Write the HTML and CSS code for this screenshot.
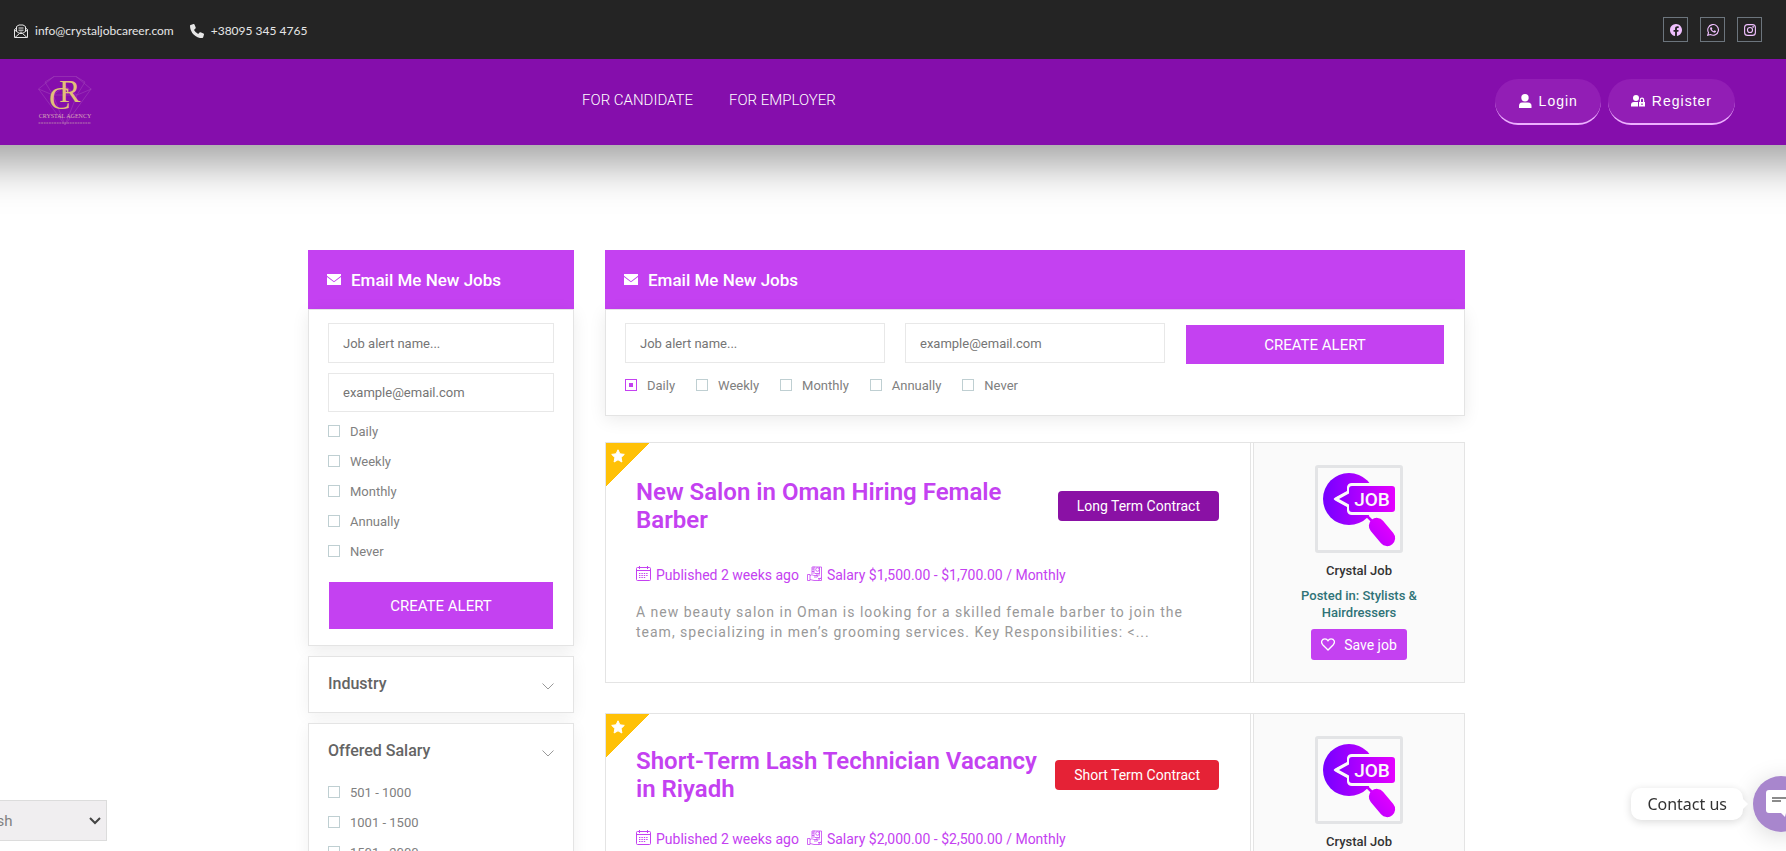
FILE: index.html
```html
<!DOCTYPE html>
<html lang="en">
<head>
    <meta charset="UTF-8">
    <meta name="viewport" content="width=device-width, initial-scale=1.0">
    <title>Crystal Job Career</title>
    <link rel="stylesheet" href="styles.css">
</head>
<body>
    <!-- shared icons -->
    <svg class="sprite" aria-hidden="true">
        <defs>
            <linearGradient id="job-gradient" x1="8" y1="0" x2="76" y2="0" gradientUnits="userSpaceOnUse">
                <stop offset="0" stop-color="#7a00ff"/>
                <stop offset="1" stop-color="#e400ff"/>
            </linearGradient>
        </defs>
        <symbol id="icon-envelope" viewBox="0 0 14 11">
            <path fill="#fff" d="M0 0h14v1.8L7 7.2 0 1.8zM0 3l7 5.3L14 3v8H0z"/>
        </symbol>
        <symbol id="icon-chevron" viewBox="0 0 12 7">
            <path fill="none" stroke="#999" d="M.5.5 6 6 11.500.5"/>
        </symbol>
        <symbol id="icon-star" viewBox="0 0 14 14">
            <path fill="#fff" stroke="#fff" stroke-linejoin="round" d="m7 .8 1.900 4 4.400.6-3.200 3.100.8 4.500L7 10.800 3.100 13l.8-4.500L.7 5.400l4.400-.6z"/>
        </symbol>
        <symbol id="icon-calendar" viewBox="0 0 15 15">
            <g fill="none" stroke="#c441f1">
                <rect x=".5" y="1.500" width="14" height="13" rx="1"/>
                <path d="M.5 4.500h14M3.500 0v3M11.500 0v3"/>
                <path d="M3 7.500h9M3 9.500h9M3 11.500h7" stroke-dasharray="1.400 1"/>
            </g>
        </symbol>
        <symbol id="icon-salary" viewBox="0 0 15 15">
            <g fill="none" stroke="#c441f1" stroke-width=".8">
                <path d="M.5 8.500H3v6H.5zM3 9.500c2-1.500 3 0 4 0h3c1 0 1 1.500 0 1.500H7M3 13.500l4 1h4l3.500-3"/>
                <path d="M5 8V1h9.500v13.500H11M7 .5v7.500M5 3h2M5 5.500h2"/>
                <circle cx="10.500" cy="3.500" r="1.800"/>
                <path d="M8 7.500h5M9 9h4M12.500 1v6M11 12.500h3"/>
            </g>
        </symbol>
        <symbol id="icon-heart" viewBox="0 0 14 13">
            <path fill="none" stroke="#fff" stroke-width="1.300" d="M7 12 1.700 6.700C-.6 4 1 .8 3.900.8 5.500.8 6.500 1.800 7 2.700 7.500 1.800 8.500.8 10.100.8 13 .8 14.600 4 12.300 6.700z"/>
        </symbol>
        <symbol id="logo-job" viewBox="0 0 82 82">
            <circle cx="31" cy="31" r="26" fill="url(#job-gradient)"/>
            <path d="m49 48 8 8" stroke="#c600ff" stroke-width="2.500"/>
            <rect x="56" y="48" width="16" height="32" rx="8" fill="url(#job-gradient)" transform="rotate(-40 64 64)"/>
            <path d="M78 15v32H34a5 5 0 0 1-5-4v-4l-11-6q-4-2 0-4l11-6v-4a5 5 0 0 1 5-4z" fill="#fafafa"/>
            <path d="M34 18h40a3 3 0 0 1 3 3v20a3 3 0 0 1-3 3H34a3 3 0 0 1-3-3v-4.500L21 31l10-5.500V21a3 3 0 0 1 3-3z" fill="url(#job-gradient)"/>
            <path d="M29 24.500 17.500 31 29 37.500" fill="none" stroke="#fafafa" stroke-width="2"/>
        </symbol>
    </svg>

    <div class="topbar">
        <div class="contacts">
            <a href="mailto:info@crystaljobcareer.com">
                <svg width="14" height="14" viewBox="0 0 14 14" fill="none" stroke="#e6e6e6">
                    <path d="M2.500 4 .5 5.500v8h13v-8l-2-1.500M2.500 7V2.500L5 1h4l2.500 1.500V7M.5 6l5 3.500M13.500 6l-5 3.500M1 13.500l4.500-4h3l4.500 4M4.500 4h5M4.500 6.200h5M5.500 8.200h3"/>
                </svg>
                info@crystaljobcareer.com
            </a>
            <a href="tel:+380953454765">
                <svg width="14" height="14" viewBox="0 0 14 14">
                    <path fill="#e6e6e6" d="M.6.9 3.500.1q.7-.2 1 .5l1.200 3q.2.6-.3 1L4 5.900A10 10 0 0 0 8.200 10l1.300-1.500q.4-.5 1-.3l3 1.300q.6.3.5 1l-.8 2.800q-.2.700-.9.700A12.300 12.300 0 0 1 0 1.700Q0 1 .6.900z"/>
                </svg>
                +38095 345 4765
            </a>
        </div>
        <div class="socials">
            <a href="#" aria-label="Facebook">
                <svg width="12" height="12" viewBox="0 0 16 16"><path fill="#f0c0ff" d="M16 8.049c0-4.446-3.582-8.050-8-8.050C3.580 0-.002 3.603-.002 8.050c0 4.017 2.926 7.347 6.750 7.951v-5.625h-2.030V8.050H6.750V6.275c0-2.017 1.195-3.131 3.022-3.131.876 0 1.791.157 1.791.157v1.980h-1.009c-.993 0-1.303.621-1.303 1.258v1.510h2.218l-.354 2.326H9.250V16c3.824-.604 6.750-3.934 6.750-7.951z"/></svg>
            </a>
            <a href="#" aria-label="WhatsApp">
                <svg width="12" height="12" viewBox="0 0 16 16">
                    <path fill="none" stroke="#f0c0ff" stroke-width="1.500" d="M1 15l1-3.600A7.100 7.100 0 1 1 4.600 14z"/>
                    <path fill="#f0c0ff" d="M5.200 4.200h.7q.3 0 .5.400l.6 1.400q.1.300-.1.500l-.6.800q1 1.600 2.700 2.300l.8-1q.2-.2.500-.1l1.600.8q.2.200.1.700-.3 1.500-2 1.500-1.500 0-3.700-1.900T4.100 6q0-1.200 1.100-1.800z"/>
                </svg>
            </a>
            <a href="#" aria-label="Instagram">
                <svg width="12" height="12" viewBox="0 0 16 16" fill="none" stroke="#f0c0ff" stroke-width="1.500">
                    <rect x=".8" y=".8" width="14.400" height="14.400" rx="4"/>
                    <circle cx="8" cy="8" r="3.400"/>
                    <circle cx="12.200" cy="3.800" r=".5"/>
                </svg>
            </a>
        </div>
    </div>

    <header class="header">
        <a class="logo" href="#" aria-label="Crystal Agency">
            <svg width="54" height="52" viewBox="0 0 54 52">
                <path fill="none" stroke="#a040b8" stroke-width=".6" d="M16 .5h22L53 13 27 49 .5 13zM16 .5 7 6l8 13 12-9 12 9 8-13-9-5.500M.5 13l14.500 6 12 30 12-30 14.500-6M15 19h24"/>
                <text x="11" y="33" class="logo-letters">C<tspan x="21" y="26">R</tspan></text>
                <text x="27" y="42" text-anchor="middle" class="logo-name">CRYSTAL AGENCY</text>
                <path stroke="#b67aae" stroke-dasharray="2 .6" d="M.5 47h52.500"/>
            </svg>
        </a>
        <nav class="nav">
            <a href="#">FOR CANDIDATE</a>
            <a href="#">FOR EMPLOYER</a>
        </nav>
        <div class="account">
            <a class="account-btn" href="#">
                <svg width="14" height="14" viewBox="0 0 14 14" fill="#fff">
                    <circle cx="7" cy="3.700" r="3.700"/>
                    <path d="M1 14V12Q1 8.500 4 8.500h6q3.500 0 3.500 3.500v2z"/>
                </svg>
                Login
            </a>
            <a class="account-btn" href="#">
                <svg width="14" height="14" viewBox="0 0 14 14" fill="#fff">
                    <circle cx="5" cy="4" r="3"/>
                    <path d="M0 12.500V11q0-3 3-3h4v4.500z"/>
                    <path fill-rule="evenodd" d="M8 8h.8V5.800q0-2.300 2.200-2.300t2.200 2.300V8h.8v4.500H8zm2 0h2V5.800q0-1-1-1t-1 1zm.4 1.500v1.500h1.200V9.500z"/>
                </svg>
                Register
            </a>
        </div>
    </header>

    <main class="page">
        <aside class="sidebar">
            <section class="panel">
                <h2 class="panel-head"><svg width="14" height="11"><use href="#icon-envelope"/></svg>Email Me New Jobs</h2>
                <form class="panel-body">
                    <input class="field" type="text" placeholder="Job alert name..." aria-label="Job alert name">
                    <input class="field" type="email" placeholder="example@email.com" aria-label="Email">
                    <div class="options">
                        <label><input type="radio" name="side-freq">Daily</label>
                        <label><input type="radio" name="side-freq">Weekly</label>
                        <label><input type="radio" name="side-freq">Monthly</label>
                        <label><input type="radio" name="side-freq">Annually</label>
                        <label><input type="radio" name="side-freq">Never</label>
                    </div>
                    <button class="create-btn" type="button">CREATE ALERT</button>
                </form>
            </section>

            <section class="filter">
                <h3 class="filter-title">Industry<svg width="12" height="7"><use href="#icon-chevron"/></svg></h3>
            </section>

            <section class="filter">
                <h3 class="filter-title">Offered Salary<svg width="12" height="7"><use href="#icon-chevron"/></svg></h3>
                <div class="options">
                    <label><input type="checkbox">501 - 1000</label>
                    <label><input type="checkbox">1001 - 1500</label>
                    <label><input type="checkbox">1501 - 2000</label>
                </div>
            </section>
        </aside>

        <div class="content">
            <section class="panel panel-wide">
                <h2 class="panel-head"><svg width="14" height="11"><use href="#icon-envelope"/></svg>Email Me New Jobs</h2>
                <form class="panel-body">
                    <div class="alert-row">
                        <input class="field" type="text" placeholder="Job alert name..." aria-label="Job alert name">
                        <input class="field" type="email" placeholder="example@email.com" aria-label="Email">
                        <button class="create-btn" type="button">CREATE ALERT</button>
                    </div>
                    <div class="options">
                        <label><input type="radio" name="main-freq" checked>Daily</label>
                        <label><input type="radio" name="main-freq">Weekly</label>
                        <label><input type="radio" name="main-freq">Monthly</label>
                        <label><input type="radio" name="main-freq">Annually</label>
                        <label><input type="radio" name="main-freq">Never</label>
                    </div>
                </form>
            </section>

            <article class="job">
                <div class="job-main">
                    <span class="ribbon"><svg width="14" height="14"><use href="#icon-star"/></svg></span>
                    <div class="job-top">
                        <h2><a href="#">New Salon in Oman Hiring Female Barber</a></h2>
                        <span class="badge badge-long">Long Term Contract</span>
                    </div>
                    <div class="job-meta">
                        <span><svg width="15" height="15"><use href="#icon-calendar"/></svg>Published 2 weeks ago</span>
                        <span><svg width="15" height="15"><use href="#icon-salary"/></svg>Salary $1,500.00 - $1,700.00 / Monthly</span>
                    </div>
                    <p>A new beauty salon in Oman is looking for a skilled female barber to join the team, specializing in men’s grooming services. Key Responsibilities: &lt;...</p>
                </div>
                <div class="job-side">
                    <svg class="job-logo" width="88" height="88" viewBox="0 0 82 82">
                        <use href="#logo-job" width="82" height="82"/>
                        <text x="54" y="38" text-anchor="middle" class="job-text">JOB</text>
                    </svg>
                    <a class="company" href="#">Crystal Job</a>
                    <a class="category" href="#">Posted in: Stylists &amp; Hairdressers</a>
                    <button class="save-btn" type="button"><svg width="14" height="13"><use href="#icon-heart"/></svg>Save job</button>
                </div>
            </article>

            <article class="job job-compact">
                <div class="job-main">
                    <span class="ribbon"><svg width="14" height="14"><use href="#icon-star"/></svg></span>
                    <div class="job-top">
                        <h2><a href="#">Short-Term Lash Technician Vacancy in Riyadh</a></h2>
                        <span class="badge badge-short">Short Term Contract</span>
                    </div>
                    <div class="job-meta">
                        <span><svg width="15" height="15"><use href="#icon-calendar"/></svg>Published 2 weeks ago</span>
                        <span><svg width="15" height="15"><use href="#icon-salary"/></svg>Salary $2,000.00 - $2,500.00 / Monthly</span>
                    </div>
                </div>
                <div class="job-side">
                    <svg class="job-logo" width="88" height="88" viewBox="0 0 82 82">
                        <use href="#logo-job" width="82" height="82"/>
                        <text x="54" y="38" text-anchor="middle" class="job-text">JOB</text>
                    </svg>
                    <a class="company" href="#">Crystal Job</a>
                </div>
            </article>
        </div>
    </main>

    <div class="language">
        <select aria-label="Language">
            <option>English</option>
        </select>
        <svg width="12" height="8" viewBox="0 0 12 8"><path fill="none" stroke="#444" stroke-width="2" d="m1 1 5 5 5-5"/></svg>
    </div>

    <div class="chat">
        <span class="chat-label">Contact us</span>
        <button class="chat-btn" type="button" aria-label="Open chat">
            <svg width="30" height="28" viewBox="0 0 30 28">
                <path fill="#fff" d="M3 0h24a3 3 0 0 1 3 3v17a3 3 0 0 1-3 3h-7l-1 4-4-4H3a3 3 0 0 1-3-3V3a3 3 0 0 1 3-3z"/>
                <path stroke="#8b8b8b" stroke-width="2" d="M6 8h18M6 11h9"/>
            </svg>
        </button>
    </div>
</body>
</html>
```
FILE: styles.css
```css
* {
    box-sizing: border-box;
}

body {
    margin: 0;
    background: #fff;
    color: #808080;
    font-family: Roboto, Arial, sans-serif;
    font-size: 13px;
    overflow-x: hidden;
}

a {
    color: inherit;
    text-decoration: none;
}

h2, h3, p {
    margin: 0;
}

button {
    border: 0;
    color: #fff;
    font-family: inherit;
    cursor: pointer;
}

.sprite {
    position: absolute;
    width: 0;
    height: 0;
}

/* Top bar */
.topbar {
    position: relative;
    z-index: 1;
    display: flex;
    justify-content: space-between;
    align-items: center;
    height: 59px;
    padding: 0 24px 0 14px;
    background: #242424;
}

.contacts {
    display: flex;
    gap: 16px;
    padding-top: 2px;
    color: #e6e6e6;
    font-family: Lato, sans-serif;
    font-size: 12px;
}

.contacts a {
    display: flex;
    align-items: center;
    gap: 7px;
}

.socials {
    display: flex;
    gap: 12px;
}

.socials a {
    display: flex;
    align-items: center;
    justify-content: center;
    width: 25px;
    height: 25px;
    border: 1px solid #6c757d;
}

/* Header */
.header {
    display: grid;
    grid-template-columns: 32% 1fr auto;
    align-items: center;
    height: 86px;
    padding: 0 51px 0 38px;
    background: #850eac;
    box-shadow: 0 -40px 40px 60px rgba(0, 0, 0, 0.36);
}

.logo svg {
    display: block;
    overflow: visible;
}

.logo-letters {
    fill: #e3c078;
    font-family: "Liberation Serif", serif;
    font-size: 32px;
}

.logo-name {
    fill: #d9a9b8;
    font-family: "Liberation Serif", serif;
    font-size: 6px;
}

.nav {
    display: flex;
    gap: 36px;
    padding: 0 0 4px 1px;
    color: #fff;
    font-size: 15px;
    font-weight: 300;
}

.account {
    display: flex;
    gap: 7px;
}

.account-btn {
    display: flex;
    align-items: center;
    gap: 7px;
    height: 46px;
    padding: 0 23px;
    border-bottom: 2px solid #edb0ff;
    border-radius: 23px;
    background: #921eb5;
    color: #fff;
    font-family: "Liberation Sans", Arial, sans-serif;
    font-size: 14px;
    letter-spacing: 1px;
}

/* Page columns */
.page {
    display: grid;
    grid-template-columns: 266px 1fr;
    gap: 31px;
    max-width: 1170px;
    margin: 0 auto;
    padding: 105px 13px 40px 0;
}

/* Job alert panel */
.panel-head {
    display: flex;
    align-items: center;
    gap: 10px;
    height: 59px;
    padding: 0 19px;
    background: #c441f1;
    color: #fff;
    font-size: 17px;
    font-weight: 500;
}

.panel-body {
    padding: 13px 19px 16px;
    border: 1px solid #e4e4e4;
    background: #fff;
    box-shadow: 0 4px 16px rgba(0, 0, 0, 0.08);
}

.field {
    display: block;
    width: 100%;
    height: 40px;
    margin-bottom: 10px;
    padding: 0 14px;
    border: 1px solid #e8e8e8;
    font-family: inherit;
    font-size: 13px;
}

.sidebar .field + .field {
    height: 39px;
    margin-bottom: 4px;
}

.field::placeholder {
    color: #757575;
}

.options label {
    display: flex;
    align-items: center;
    gap: 10px;
    height: 30px;
}

.options input {
    appearance: none;
    width: 12px;
    height: 12px;
    margin: 0;
    border: 1px solid #bfcfd2;
    background: #fff;
}

.options input:checked {
    border-color: #c441f1;
    background: #c441f1;
    box-shadow: inset 0 0 0 3px #fff;
}

.create-btn {
    height: 47px;
    background: #c441f1;
    font-size: 15px;
}

.sidebar .create-btn {
    display: block;
    width: calc(100% - 2px);
    margin: 16px 1px 0;
}

.panel-wide .field {
    margin: 0;
}

.panel-wide .create-btn {
    height: 39px;
    margin: 2px 1px 0;
}

.alert-row {
    display: grid;
    grid-template-columns: repeat(3, 1fr);
    gap: 20px;
}

.panel-wide .panel-body {
    padding-bottom: 15px;
}

.panel-wide .options {
    display: flex;
    flex-wrap: wrap;
    gap: 21px;
    margin-top: 6px;
}

/* Sidebar filters */
.filter {
    margin-top: 10px;
    padding: 0 19px 2px;
    border: 1px solid #e4e4e4;
    background: #fff;
    box-shadow: 0 4px 16px rgba(0, 0, 0, 0.06);
}

.filter-title {
    display: flex;
    align-items: center;
    justify-content: space-between;
    height: 53px;
    color: #646464;
    font-size: 16px;
    font-weight: 500;
}

.filter-title svg {
    margin-top: 6px;
}

/* Job cards */
.job {
    display: grid;
    grid-template-columns: 1fr 212px;
    min-height: 241px;
    border: 1px solid #e4e4e4;
    border-right: 0;
    margin-top: 26px;
}

.job + .job {
    margin-top: 30px;
}

.job-main {
    position: relative;
    margin-right: 2px;
    padding: 35px 31px 0 30px;
    border-right: 1px solid #e4e4e4;
}

.ribbon {
    position: absolute;
    top: 0;
    left: 0;
    width: 44px;
    height: 44px;
    padding: 6px 5px;
    background: linear-gradient(135deg, #ffc107 50%, transparent 50%);
}

.job-top {
    display: flex;
    align-items: center;
    justify-content: space-between;
    gap: 10px;
}

.job h2 {
    color: #c441f1;
    font-size: 24px;
    font-weight: 600;
    line-height: 28px;
}

.badge {
    flex-shrink: 0;
    padding: 0 19px;
    border-radius: 4px;
    color: #fff;
    font-size: 14px;
    line-height: 30px;
}

.badge-long {
    background: #8a11a5;
}

.badge-short {
    background: #e52236;
}

.job-meta {
    display: flex;
    gap: 8px;
    margin-top: 31px;
    color: #c441f1;
    font-size: 14px;
    line-height: 20px;
}

.job-meta span {
    display: flex;
    align-items: center;
    gap: 5px;
}

.job-meta svg {
    margin-bottom: 4px;
}

.job p {
    margin-top: 17px;
    color: #999;
    font-size: 14px;
    letter-spacing: 1px;
    line-height: 20px;
}

.job-compact .job-main {
    padding-top: 33px;
}

.job-compact .job-meta {
    margin-top: 26px;
}

.job-side {
    display: flex;
    flex-direction: column;
    align-items: center;
    padding: 22px 20px;
    border: solid #e4e4e4;
    border-width: 0 1px;
    background: #fafafa;
    font-weight: 500;
    text-align: center;
    line-height: 17px;
}

.job-logo {
    border: 3px solid #e3e4e6;
    border-radius: 3px;
}

.job-text {
    fill: #fafafa;
    font-family: Roboto, sans-serif;
    font-size: 19px;
    font-weight: 500;
}

.company {
    margin-top: 9px;
    color: #333;
}

.category {
    margin-top: 8px;
    color: #2f7377;
}

.save-btn {
    display: flex;
    align-items: center;
    gap: 9px;
    height: 31px;
    margin-top: 8px;
    padding: 0 10px;
    border-radius: 3px;
    background: #c441f1;
    font-size: 14px;
}

/* Floating widgets */
.language {
    position: fixed;
    left: -53px;
    bottom: 10px;
    width: 160px;
}

.language select {
    appearance: none;
    display: block;
    width: 100%;
    height: 41px;
    padding: 0 16px;
    border: 1px solid #dcdcdc;
    border-radius: 0;
    background: #f0eef0;
    color: #808080;
    font-family: inherit;
    font-size: 15px;
}

.language svg {
    position: absolute;
    top: 17px;
    right: 6px;
    pointer-events: none;
}

.chat {
    position: fixed;
    right: -23px;
    bottom: 19px;
    display: flex;
    align-items: center;
    gap: 10px;
}

.chat-label {
    position: relative;
    padding: 0 16px;
    border-radius: 10px;
    background: #fff;
    box-shadow: 0 2px 8px rgba(0, 0, 0, 0.15);
    color: #333;
    font-family: "Noto Sans", sans-serif;
    font-size: 16px;
    line-height: 32px;
}

.chat-label::after {
    content: "";
    position: absolute;
    top: 11px;
    right: -5px;
    border: solid transparent;
    border-width: 5px 0 5px 5px;
    border-left-color: #fff;
}

.chat-btn {
    width: 56px;
    height: 56px;
    padding: 2px 0 0;
    border-radius: 50%;
    background: #a886cd;
    box-shadow: 0 4px 24px rgba(2, 6, 16, 0.15);
}
```
